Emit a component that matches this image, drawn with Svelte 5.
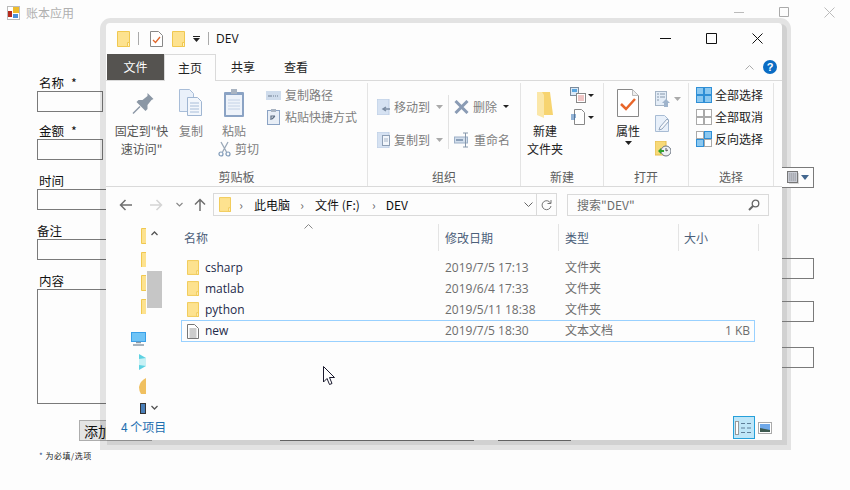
<script>
  const files = [
    { name: 'csharp', date: '2019/7/5 17:13', type: '文件夹', size: '' },
    { name: 'matlab', date: '2019/6/4 17:33', type: '文件夹', size: '' },
    { name: 'python', date: '2019/5/11 18:38', type: '文件夹', size: '' },
    { name: 'new', date: '2019/7/5 18:30', type: '文本文档', size: '1 KB', doc: true }
  ]
</script>

{#snippet folder(w = 13, h = 16)}
  <svg width={w} height={h} viewBox="0 0 13 16" class="ico">
    <path d="M.5.5h12v15H.5z" fill="#fde28f" stroke="#f0c850" />
    <path d="M10.5 11.5h2v4h-2z" fill="#fff3c8" stroke="#f0c850" />
  </svg>
{/snippet}

{#snippet caret()}
  <svg width="7" height="4" viewBox="0 0 7 4" class="caret"><path d="M0 0h7L3.5 4z" fill="#aaa" /></svg>
{/snippet}

{#snippet grid4(cells)}
  <svg width="16" height="16" viewBox="0 0 16 16" class="ico">
    {#each cells as on, i}
      <rect
        x={i % 2 ? 8.5 : 0.5}
        y={i > 1 ? 8.5 : 0.5}
        width="7"
        height="7"
        fill={on ? '#8cc8f0' : '#fff'}
        stroke={on ? '#2f8fd6' : '#aaa'}
      />
    {/each}
  </svg>
{/snippet}

<div class="app">
  <header class="apptitle">
    <svg width="13" height="14" viewBox="0 0 13 14" class="ico">
      <rect x=".5" y=".5" width="12" height="13" fill="#fff" stroke="#bbb" />
      <rect x="1" y="5" width="4" height="6" fill="#b52a1c" />
      <rect x="6" y="1" width="6" height="6" fill="#eebc2c" />
      <rect x="6" y="8" width="5" height="4" fill="#4a8fd8" />
    </svg>
    <span>账本应用</span>
    <div class="appctl">
      <svg width="11" height="11" viewBox="0 0 11 11"><path d="M0 5.5h10" stroke="#bbb" /></svg>
      <svg width="11" height="11" viewBox="0 0 11 11"><path d="M.5.5h9v9h-9z" fill="none" stroke="#aaa" /></svg>
      <svg width="11" height="11" viewBox="0 0 11 11"><path d="M.5.5l10 10M10.5.5l-10 10" stroke="#bbb" /></svg>
    </div>
  </header>

  <div class="form">
    <div class="leftcol">
      <label class="first">名称<b>*</b></label>
      <div class="box short"></div>
      <label class="tight">金额<b>*</b></label>
      <div class="box short"></div>
      <label>时间</label>
      <div class="box wide"></div>
      <label class="flush">备注</label>
      <div class="box wide"></div>
      <label>内容</label>
      <div class="box area"></div>
      <div class="actions">
        <button class="add">添加</button>
        <div class="box field2"></div>
        <div class="box field3"></div>
      </div>
      <p class="note"><i>*</i> 为必填/选项</p>
    </div>
    <div class="rightcol">
      <div class="box picker">
        <svg width="12" height="13" viewBox="0 0 12 13">
          <rect x="2" y="2" width="10" height="11" fill="#d8d8d8" />
          <rect x=".5" y=".5" width="10" height="11" fill="#c9ccd4" stroke="#777" />
          <path d="M2 3h7M2 5h7M2 7h7M2 9h7" stroke="#8d8f96" stroke-dasharray="1.500 .5" />
        </svg>
        <svg width="8" height="5" viewBox="0 0 8 5"><path d="M0 0h8L4 5z" fill="#43678f" /></svg>
      </div>
      <div class="box r1"></div>
      <div class="box r2"></div>
      <div class="box r3"></div>
    </div>
  </div>

  <section class="explorer">
    <div class="wintitle">
      {@render folder()}
      <i class="qsep"></i>
      <svg width="13" height="16" viewBox="0 0 13 16" class="ico doc">
        <path d="M.5.5h8l4 4v11H.5z" fill="#fff" stroke="#888" />
        <path d="M3 9l2.500 2.500L10 6" fill="none" stroke="#e0662a" stroke-width="1.300" />
      </svg>
      {@render folder()}
      <svg width="7" height="6" viewBox="0 0 7 6" class="qat"><path d="M0 .5h7" stroke="#222" /><path d="M0 2h7L3.500 6z" fill="#222" /></svg>
      <i class="qsep"></i>
      <span class="wname">DEV</span>
      <div class="winctl">
        <svg width="11" height="11" viewBox="0 0 11 11"><path d="M0 5.500h11" stroke="#111" /></svg>
        <svg width="11" height="11" viewBox="0 0 11 11"><path d="M.5.5h10v10H.5z" fill="none" stroke="#111" /></svg>
        <svg width="11" height="11" viewBox="0 0 11 11"><path d="M.5.5l10 10M10.500.5l-10 10" stroke="#111" /></svg>
      </div>
    </div>

    <nav class="tabs">
      <span class="tab file">文件</span>
      <span class="tab on">主页</span>
      <span class="tab share">共享</span>
      <span class="tab view">查看</span>
      <span class="tabfill">
        <svg width="9" height="6" viewBox="0 0 9 6"><path d="M.5 5.500l4-4 4 4" fill="none" stroke="#aaa" /></svg>
        <span class="help">?</span>
      </span>
    </nav>

    <div class="ribbon">
      <div class="group g1">
        <div class="tools">
          <div class="big pin off">
            <svg width="24" height="30" viewBox="0 0 24 30">
              <g transform="translate(2.500 5)" fill="#8b97a5">
                <path d="M15 0l6 6-2 1-4 5v4l-2 2-9-9 2-2h4l5-4z" />
                <path d="M7 13L0 20l1 1 7-7z" />
              </g>
            </svg>
            <span>固定到"快<br />速访问"</span>
          </div>
          <div class="big copy off">
            <svg width="26" height="30" viewBox="0 0 26 30">
              <path d="M1.500 1.500h10l4 4v18h-14z" fill="#eaf1fa" stroke="#a8bdd8" />
              <path d="M9.500 9.500h10l4 4v14h-14z" fill="#f3f7fc" stroke="#a0b6d2" />
              <path d="M12 15h9M12 18h9M12 21h9M12 24h9" stroke="#a8bdd8" />
            </svg>
            <span>复制</span>
          </div>
          <div class="pastecol">
            <div class="big paste off">
              <svg width="22" height="30" viewBox="0 0 22 30">
                <rect x="1" y="4" width="20" height="25" rx="1" fill="#8ba3c4" />
                <rect x="3" y="7" width="16" height="20" fill="#eef3fa" />
                <path d="M5 12h12M5 15h12M5 18h12M5 21h12" stroke="#c4d2e6" />
                <rect x="8" y="1" width="6" height="5" fill="#a9b4c2" />
              </svg>
              <span>粘贴</span>
            </div>
            <div class="small off cut">
              <svg width="13" height="16" viewBox="0 0 13 16">
                <path d="M3 1l5.500 10M10 1L4.500 11" stroke="#9aa8b8" stroke-width="1.300" />
                <circle cx="3" cy="13" r="2" fill="none" stroke="#7f9ab8" stroke-width="1.200" />
                <circle cx="10" cy="13" r="2" fill="none" stroke="#7f9ab8" stroke-width="1.200" />
              </svg>
              <span>剪切</span>
            </div>
          </div>
          <div class="smallcol">
            <div class="small off">
              <svg width="15" height="9" viewBox="0 0 15 9"><rect width="15" height="9" fill="#cfdcec" /><path d="M2 5h4M7 5h1M9 5h1M11 5h1" stroke="#6d7c90" /></svg>
              <span>复制路径</span>
            </div>
            <div class="small off">
              <svg width="15" height="16" viewBox="0 0 15 16">
                <rect x="1.500" y="1.500" width="12" height="14" fill="#e8eef6" stroke="#8ba3c4" />
                <rect x="5" y="0" width="5" height="3" fill="#a9b4c2" />
                <path d="M5 11V7h4M9 7l-3 3" fill="none" stroke="#5d6d82" stroke-width="1.200" />
              </svg>
              <span>粘贴快捷方式</span>
            </div>
          </div>
        </div>
        <div class="cap">剪贴板</div>
      </div>

      <div class="group g2">
        <div class="tools">
          <div class="orgcol left">
            <div class="small off">
              <svg width="13" height="16" viewBox="0 0 13 16"><rect width="12" height="16" fill="#d6e2f2" stroke="#bccde4" /><path d="M13 10H7M9 8l-3 2 3 2" fill="none" stroke="#7b8ca2" stroke-width="1.500" /></svg>
              <span>移动到</span>{@render caret()}
            </div>
            <div class="small off">
              <svg width="13" height="16" viewBox="0 0 13 16"><rect width="12" height="16" fill="#d6e2f2" stroke="#bccde4" /><rect x="5.500" y="3.500" width="7" height="10" fill="#f2f6fb" stroke="#8e9fb5" /><path d="M7 7h4M7 9h4" stroke="#a8b6c8" /></svg>
              <span>复制到</span>{@render caret()}
            </div>
          </div>
          <i class="orgsep"></i>
          <div class="orgcol">
            <div class="small off">
              <svg width="15" height="14" viewBox="0 0 15 14"><path d="M1.500 1l12 12M13.500 1l-12 12" stroke="#8a9bb4" stroke-width="3" /></svg>
              <span>删除</span>
              <svg width="6" height="3" viewBox="0 0 6 3" class="caret"><path d="M0 0h6L3 3z" fill="#222" /></svg>
            </div>
            <div class="small off">
              <svg width="16" height="16" viewBox="0 0 16 16"><rect x=".5" y="5" width="13" height="6" fill="#d3dfed" stroke="#9db0c7" /><rect x="2" y="7" width="7" height="2" fill="#8ba0ba" /><path d="M11.500 1v14M9 1h5M9 15h5" stroke="#8798ac" /></svg>
              <span>重命名</span>
            </div>
          </div>
        </div>
        <div class="cap">组织</div>
      </div>

      <div class="group g3">
        <div class="tools">
          <div class="big newf">
            <svg width="18" height="30" viewBox="0 0 18 30">
              <path d="M3 4h11l3 23H3z" fill="#f7d470" />
              <path d="M1 4h5l2 3v23l-7-3z" fill="#fbe7a8" />
            </svg>
            <span>新建<br />文件夹</span>
          </div>
          <div class="smallcol">
            <div class="small">
              <svg width="16" height="16" viewBox="0 0 16 16">
                <rect x=".5" y=".5" width="8" height="8" fill="#dbe9f7" stroke="#7b8b9c" />
                <rect x="2" y="2" width="5" height="3" fill="#5aa6e0" />
                <rect x="6.500" y="6.500" width="9" height="9" fill="#fff" stroke="#888" />
                <path d="M8 9h6M8 11h6M8 13h6" stroke="#e08a8a" />
              </svg>
              <svg width="6" height="3" viewBox="0 0 6 3" class="caret"><path d="M0 0h6L3 3z" fill="#222" /></svg>
            </div>
            <div class="small">
              <svg width="16" height="16" viewBox="0 0 16 16">
                <path d="M4.500.5h7l3 3v12h-10z" fill="#fff" stroke="#888" />
                <path d="M1 6h5M1 8h5M1 10h4" stroke="#2a6bb0" />
              </svg>
              <svg width="6" height="3" viewBox="0 0 6 3" class="caret"><path d="M0 0h6L3 3z" fill="#222" /></svg>
            </div>
          </div>
        </div>
        <div class="cap">新建</div>
      </div>

      <div class="group g4">
        <div class="tools">
          <div class="big prop">
            <svg width="22" height="30" viewBox="0 0 22 30">
              <path d="M.5 1.500h15l6 6v21H.5z" fill="#fff" stroke="#888" />
              <path d="M15.500 1.500v6h6" fill="#eee" stroke="#bbb" />
              <path d="M4 16l5 5 9-10" fill="none" stroke="#e8662a" stroke-width="2.500" />
            </svg>
            <span>属性</span>
            <svg width="7" height="4" viewBox="0 0 7 4" class="propcaret"><path d="M0 0h7L3.500 4z" fill="#222" /></svg>
          </div>
          <div class="opencol">
            <div class="small">
              <svg width="15" height="16" viewBox="0 0 15 16">
                <rect x=".5" y=".5" width="11" height="14" fill="#e4edf7" stroke="#a4b4c6" />
                <path d="M2 3h2M5 3h5M2 6h2M5 6h5M2 9h2" stroke="#8798ac" />
                <path d="M11 8l4 4h-2v4h-4v-4H7z" fill="#9fb4cc" />
              </svg>
              {@render caret()}
            </div>
            <div class="small">
              <svg width="15" height="17" viewBox="0 0 15 17">
                <path d="M.5.500h9l4 4v12H.5z" fill="#e8f0fa" stroke="#a8bcd4" />
                <path d="M5 12l7-8 2 2-7 8-3 1z" fill="#f5f8fc" stroke="#93a6bd" />
              </svg>
            </div>
            <div class="small">
              <svg width="16" height="16" viewBox="0 0 16 16">
                <rect width="11" height="14" fill="#f7d978" stroke="#e6bc4c" />
                <circle cx="11" cy="10" r="5" fill="#eef1f3" stroke="#6b7480" />
                <path d="M11 7v3l2-1" fill="none" stroke="#555" />
                <path d="M3 10l3-3v2h3v2H6v2z" fill="#2fa32f" />
              </svg>
            </div>
          </div>
        </div>
        <div class="cap">打开</div>
      </div>

      <div class="group g5">
        <div class="tools">
          <div class="smallcol">
            <div class="small">{@render grid4([true, true, true, true])}<span>全部选择</span></div>
            <div class="small">{@render grid4([false, false, false, false])}<span>全部取消</span></div>
            <div class="small">{@render grid4([false, true, true, false])}<span>反向选择</span></div>
          </div>
        </div>
        <div class="cap">选择</div>
      </div>
    </div>

    <div class="addr">
      <svg width="13" height="12" viewBox="0 0 13 12"><path d="M13 6H2M6.500 1L1.500 6l5 5" fill="none" stroke="#6f6f6f" stroke-width="1.500" /></svg>
      <svg class="fwd" width="13" height="12" viewBox="0 0 13 12"><path d="M0 6h11M6.500 1l5 5-5 5" fill="none" stroke="#d4d4d4" stroke-width="1.500" /></svg>
      <svg class="hist" width="7" height="5" viewBox="0 0 7 5"><path d="M.5 1l3 3 3-3" fill="none" stroke="#888" stroke-width="1.200" /></svg>
      <svg class="up" width="12" height="13" viewBox="0 0 12 13"><path d="M6 13V2M1 6.500l5-5 5 5" fill="none" stroke="#6f6f6f" stroke-width="1.500" /></svg>
      <div class="crumbs">
        {@render folder(12, 15)}
        <span class="chev first">›</span><span>此电脑</span>
        <span class="chev">›</span><span>文件 (F:)</span>
        <span class="chev last">›</span><span>DEV</span>
        <svg class="ddn" width="9" height="5" viewBox="0 0 9 5"><path d="M.5.500l4 4 4-4" fill="none" stroke="#666" /></svg>
        <div class="refresh">
          <svg width="11" height="12" viewBox="0 0 11 12"><path d="M9.500 4A4.500 4.500 0 1 0 10 7M10 1v3.500H6.500" fill="none" stroke="#777" /></svg>
        </div>
      </div>
      <div class="search">
        <span>搜索"DEV"</span>
        <svg width="12" height="12" viewBox="0 0 12 12"><circle cx="7.500" cy="4.500" r="3.300" fill="none" stroke="#666" stroke-width="1.300" /><path d="M5 7l-4 4" stroke="#666" stroke-width="2" /></svg>
      </div>
    </div>

    <div class="body">
      <aside class="side">
        <div class="navicons">
          <div class="nav">{@render folder()}</div>
          <div class="nav">{@render folder()}</div>
          <div class="nav">{@render folder()}</div>
          <div class="nav">{@render folder()}</div>
          <svg class="pc" width="15" height="14" viewBox="0 0 15 14">
            <rect width="15" height="10" fill="#3aa0e8" />
            <rect x="1" y="1" width="13" height="8" fill="#6fc4f6" />
            <path d="M5 10.500h5M2 13h11" stroke="#8a9aa8" stroke-width="1.500" />
          </svg>
          <svg class="net" width="7" height="16" viewBox="0 0 7 16"><path d="M0 0l7 4v8l-7 4z" fill="#5ed2e2" /><path d="M0 5l7-1v8l-7-1z" fill="#c8f1f5" /></svg>
          <svg class="grp" width="7" height="16" viewBox="0 0 7 16"><path d="M7 0v16H2Q0 13 0 9 1 3 7 0z" fill="#f0c060" /></svg>
          <svg class="vid" width="6" height="11" viewBox="0 0 6 11"><rect width="6" height="11" fill="#333" /><rect x="1" y="1" width="4" height="9" fill="#4a7fb8" /></svg>
        </div>
        <div class="track">
          <svg width="7" height="5" viewBox="0 0 7 5"><path d="M.5 4l3-3 3 3" fill="none" stroke="#555" stroke-width="1.300" /></svg>
          <div class="thumb"></div>
          <svg class="down" width="7" height="5" viewBox="0 0 7 5"><path d="M.5 1l3 3 3-3" fill="none" stroke="#555" stroke-width="1.300" /></svg>
        </div>
      </aside>

      <div class="main">
        <div class="head">
          <span class="col c1">名称<svg class="sort" width="9" height="5" viewBox="0 0 9 5"><path d="M.5 4.500l4-4 4 4" fill="none" stroke="#888" /></svg></span>
          <span class="col c2">修改日期</span>
          <span class="col c2">类型</span>
          <span class="col c3">大小</span>
        </div>
        <div class="rows">
          {#each files as f}
            <div class="row" class:sel={f.doc}>
              {#if f.doc}
                <svg width="12" height="15" viewBox="0 0 12 15" class="ico">
                  <path d="M.5.500h7l4 4v10H.5z" fill="#fff" stroke="#777" />
                  <path d="M2.500 5h7M2.500 7h7M2.500 9h7M2.500 11h7M2.500 13h7" stroke="#999" />
                </svg>
              {:else}
                {@render folder(12, 15)}
              {/if}
              <span class="name">{f.name}</span>
              <span class="meta">{f.date}</span>
              <span class="meta">{f.type}</span>
              <span class="meta size">{f.size}</span>
            </div>
          {/each}
        </div>
      </div>
    </div>

    <footer class="status">
      <span>4 个项目</span>
      <div class="views">
        <div class="vbtn">
          <svg width="18" height="14" viewBox="0 0 18 14">
            <rect x=".5" y=".5" width="3" height="13" fill="#fff" stroke="#999" />
            <path d="M6 2.500h4M12 2.500h4M6 7h4M12 7h4M6 11.500h4M12 11.500h4" stroke="#5f7f99" />
          </svg>
        </div>
        <svg class="thumbv" width="14" height="12" viewBox="0 0 14 12">
          <rect x=".5" y=".5" width="13" height="11" fill="#fff" stroke="#aaa" />
          <rect x="2" y="2" width="10" height="8" fill="#6fa8e8" />
          <path d="M2 6l5 1 5 1v2H2z" fill="#3d5a50" />
        </svg>
      </div>
    </footer>

    <svg class="cursor" width="13" height="20" viewBox="0 0 13 20">
      <path d="M.5.500v15.500l3.500-3.500 2.500 6 2.500-1-2.500-6h5z" fill="#fff" stroke="#1a1a2e" />
    </svg>
  </section>
</div>

<style>
  :global(body) {
    margin: 0;
    background: #fdfdfd;
  }

  .app {
    position: relative;
    width: 850px;
    height: 490px;
    overflow: hidden;
    background: #fdfdfd;
    font: 12px/18px 'Noto Sans CJK SC', 'Noto Sans', sans-serif;
    color: #222;
  }

  svg {
    flex: none;
    display: block;
  }

  /* background form */
  .apptitle {
    display: flex;
    align-items: center;
    height: 25px;
    padding-left: 7px;
    color: #b0b0b0;
  }

  .apptitle span {
    margin-left: 6px;
  }

  .appctl {
    display: flex;
    gap: 34px;
    margin-left: auto;
    margin-right: 15px;
  }

  .form {
    display: flex;
    justify-content: space-between;
    padding: 0 36px 0 37px;
  }

  .leftcol {
    width: 600px;
  }

  label {
    display: block;
    height: 16px;
    line-height: 16px;
    margin-top: 13px;
    padding-left: 2px;
    font-size: 12.500px;
    color: #111;
  }

  label b {
    margin-left: 7px;
    font-weight: 400;
  }

  label.first {
    margin-top: 50px;
  }

  label.tight {
    margin-top: 11px;
  }

  label.flush {
    padding-left: 0;
  }

  .box {
    box-sizing: border-box;
    height: 21px;
    border: 1px solid #7a7a7a;
    background: #fdfdfd;
  }

  .short {
    width: 66px;
  }

  .wide {
    width: 200px;
  }

  .area {
    width: 200px;
    height: 115px;
  }

  .actions {
    display: flex;
    margin: 16px 0 0 42px;
  }

  .add {
    box-sizing: border-box;
    width: 73px;
    height: 21px;
    padding: 0 0 0 4px;
    border: 1px solid #adadad;
    background: #e4e4e4;
    font: inherit;
    font-size: 14px;
    text-align: left;
    color: #111;
  }

  .field2 {
    width: 194px;
    margin-left: 128px;
  }

  .field3 {
    width: 73px;
    margin-left: 24px;
    background: #e4e4e4;
  }

  .note {
    margin: 7px 0 0 2px;
    font-size: 8px;
    line-height: 16px;
    letter-spacing: .5px;
    color: #222;
  }

  .note i {
    font-style: normal;
    color: #2a4a8a;
  }

  /* only the part sticking out past the window, drawn over its shadow */
  .rightcol {
    position: relative;
    z-index: 1;
    width: 32px;
    padding-top: 142px;
  }

  .rightcol .box {
    border-left: 0;
    background: transparent;
  }

  .rightcol .picker {
    display: flex;
    align-items: center;
    gap: 2px;
    padding-left: 5px;
    background: #fdfdfd;
  }

  .r1 {
    margin-top: 70px;
  }

  .r2 {
    margin-top: 22px;
  }

  .r3 {
    margin-top: 25px;
  }

  /* explorer window */
  .explorer {
    position: absolute;
    left: 106px;
    top: 23px;
    display: flex;
    flex-direction: column;
    width: 676px;
    height: 417px;
    background: #fdfdfd;
    border-radius: 4px 4px 0 0;
    box-shadow: 3px 3px 0 2px rgba(0, 0, 0, .08), 1.500px 2.500px 0 7.500px rgba(0, 0, 0, .1);
  }

  .wintitle {
    display: flex;
    align-items: center;
    height: 31px;
    padding-left: 11px;
    flex: none;
  }

  .qsep {
    width: 1px;
    height: 13px;
    margin: 0 11px 0 8px;
    background: #aaa;
  }

  .doc {
    margin: 0 9px 0 0;
  }

  .qat {
    margin-left: 8px;
  }

  .wname {
    margin-left: -4px;
    font-family: 'Open Sans', sans-serif;
    color: #111;
  }

  .winctl {
    display: flex;
    gap: 35px;
    margin-left: auto;
    margin-right: 19px;
  }

  .tabs {
    display: flex;
    flex: none;
    height: 27px;
    box-sizing: border-box;
    border-bottom: 1px solid #dadada;
  }

  .tab {
    box-sizing: border-box;
    height: 27px;
    line-height: 25px;
    text-align: center;
  }

  .file {
    width: 57px;
    background: #555350;
    color: #fff;
    margin-left: 1px;
    height: 26px;
  }

  .on {
    width: 52px;
    background: #fdfdfd;
    border: 1px solid #dadada;
    border-bottom: 0;
  }

  .share {
    width: 54px;
  }

  .view {
    width: 52px;
  }

  .tabfill {
    display: flex;
    flex: 1;
    align-items: center;
    justify-content: flex-end;
    gap: 9px;
    padding-right: 5px;
  }

  .help {
    width: 14px;
    height: 14px;
    border-radius: 50%;
    background: #0a6cc4;
    color: #fff;
    font: 700 11px/14px 'Liberation Sans', sans-serif;
    text-align: center;
  }

  .ribbon {
    display: flex;
    flex: none;
    height: 106px;
    box-sizing: border-box;
    border-bottom: 1px solid #dadada;
  }

  .group {
    display: flex;
    flex-direction: column;
    flex: none;
    box-sizing: border-box;
    height: 103px;
    margin-top: 2px;
    border-right: 1px solid #e4e4e4;
  }

  .g1 {
    width: 262px;
  }

  .g2 {
    width: 153px;
  }

  .g3 {
    width: 83px;
  }

  .g4 {
    width: 85px;
  }

  .g5 {
    width: 85px;
  }

  .tools {
    display: flex;
    flex: 1;
    min-height: 0;
  }

  .cap {
    flex: none;
    line-height: 18px;
    text-align: center;
    color: #5c5c5c;
  }

  .big {
    display: flex;
    flex-direction: column;
    align-items: center;
    padding-top: 5px;
    text-align: center;
  }

  .big span {
    margin-top: 4px;
  }

  .off {
    color: #7d7d7d;
  }

  .pin {
    width: 63px;
    margin-left: 4px;
    color: #555;
  }

  .copy {
    width: 30px;
    margin-left: 3px;
  }

  .pastecol {
    width: 42px;
    margin-left: 13px;
  }

  .paste {
    width: 30px;
  }

  .small {
    display: flex;
    align-items: center;
    gap: 4px;
    height: 22px;
    white-space: nowrap;
  }

  .cut {
    height: 22px;
    margin-top: -2px;
    margin-left: -1px;
  }

  .smallcol {
    margin-left: 5px;
    padding-top: 1px;
  }

  .g2 .tools {
    padding: 7px 0 0 9px;
  }

  .orgcol {
    width: 64px;
  }

  .orgcol.left {
    width: 71px;
  }

  .orgcol .small {
    height: 33px;
  }

  .orgcol .caret {
    margin-left: 2px;
  }

  .orgsep {
    width: 1px;
    height: 54px;
    margin: 5px 5px 0 0;
    background: #e2e2e2;
  }

  .newf {
    width: 48px;
  }

  .g3 .smallcol {
    margin-left: 1px;
  }

  .g3 .small {
    gap: 2px;
  }

  .prop {
    width: 48px;
  }

  .propcaret {
    margin-top: 1px;
  }

  .opencol {
    margin-left: 3px;
    padding-top: 3px;
  }

  .opencol .small {
    height: 25px;
  }

  .g5 .smallcol {
    margin-left: 7px;
  }

  .g5 .small {
    gap: 3px;
  }

  .addr {
    display: flex;
    align-items: center;
    flex: none;
    height: 35px;
    padding-left: 13px;
    color: #111;
  }

  .fwd {
    margin-left: 18px;
  }

  .hist {
    margin-left: 13px;
  }

  .up {
    margin-left: 11px;
  }

  .crumbs {
    display: flex;
    align-items: center;
    box-sizing: border-box;
    width: 344px;
    height: 23px;
    margin-left: 7px;
    padding-left: 5px;
    border: 1px solid #dadada;
  }

  .chev {
    width: 6px;
    margin: 0 10px 0 9px;
    color: #666;
    text-align: center;
  }

  .chev.first {
    margin-left: 7px;
  }

  .chev.last {
    margin: 0 9px 0 11px;
  }

  .ddn {
    margin-left: auto;
    margin-right: 3px;
  }

  .refresh {
    display: flex;
    align-items: center;
    justify-content: center;
    width: 19px;
    height: 21px;
    border-left: 1px solid #dadada;
  }

  .search {
    display: flex;
    align-items: center;
    justify-content: space-between;
    box-sizing: border-box;
    width: 202px;
    height: 22px;
    margin-left: 10px;
    padding: 0 8px 0 9px;
    border: 1px solid #dadada;
    color: #6d6d6d;
  }

  .body {
    display: flex;
    flex: 1;
    min-height: 0;
  }

  .side {
    display: flex;
    width: 75px;
    flex: none;
    padding-left: 25px;
    box-sizing: border-box;
  }

  .navicons {
    display: flex;
    flex-direction: column;
    align-items: flex-end;
    width: 15px;
    overflow: hidden;
    padding-top: 6px;
  }

  .nav {
    width: 5px;
    height: 16px;
    margin-bottom: 8px;
    overflow: hidden;
  }

  .pc {
    margin-top: 10px;
  }

  .net {
    margin-top: 8px;
  }

  .grp {
    margin-top: 8px;
  }

  .vid {
    margin-top: 9px;
  }

  .track {
    display: flex;
    flex-direction: column;
    align-items: center;
    width: 15px;
    margin-left: 1px;
    padding-top: 9px;
    box-sizing: border-box;
    height: 192px;
  }

  .thumb {
    width: 15px;
    height: 37px;
    margin-top: 35px;
    background: #c6c6c6;
  }

  .down {
    margin-top: auto;
    margin-bottom: 4px;
  }

  .main {
    flex: 1;
    min-width: 0;
  }

  .head {
    display: flex;
    height: 30px;
    color: #4c607a;
  }

  .col {
    position: relative;
    box-sizing: border-box;
    height: 27px;
    margin-top: 2px;
    padding-left: 6px;
    line-height: 27px;
    border-right: 1px solid #e4e4e4;
  }

  .c1 {
    width: 258px;
    padding-left: 3px;
  }

  .c2 {
    width: 120px;
  }

  .c3 {
    width: 80px;
    padding-left: 5px;
  }

  .sort {
    position: absolute;
    left: 123px;
    top: 0;
  }

  .rows {
    width: 574px;
    padding-top: 5px;
  }

  .row {
    display: grid;
    grid-template-columns: 18px 240px 120px 120px 1fr;
    align-items: center;
    height: 21px;
    padding: 0 5px 0 6px;
    box-sizing: border-box;
  }

  .row.sel {
    height: 22px;
    outline: 1px solid #99d1ff;
    outline-offset: -1px;
  }

  .name {
    color: #1e2a4a;
    font-family: 'Open Sans', sans-serif;
  }

  .meta {
    color: #6d6d6d;
    font-family: 'Open Sans', 'Noto Sans CJK SC', sans-serif;
  }

  .size {
    text-align: right;
  }

  .status {
    display: flex;
    flex: none;
    align-items: flex-end;
    justify-content: space-between;
    height: 25px;
    padding: 0 10px 1px 15px;
    color: #1e6fb0;
  }

  .status > span {
    padding-bottom: 3px;
  }

  .views {
    display: flex;
    align-items: center;
    gap: 3px;
  }

  .vbtn {
    display: flex;
    align-items: center;
    justify-content: center;
    box-sizing: border-box;
    width: 22px;
    height: 23px;
    border: 1px solid #26a0da;
    background: #bfe6f8;
  }

  .cursor {
    position: absolute;
    left: 217px;
    top: 343px;
  }
</style>
